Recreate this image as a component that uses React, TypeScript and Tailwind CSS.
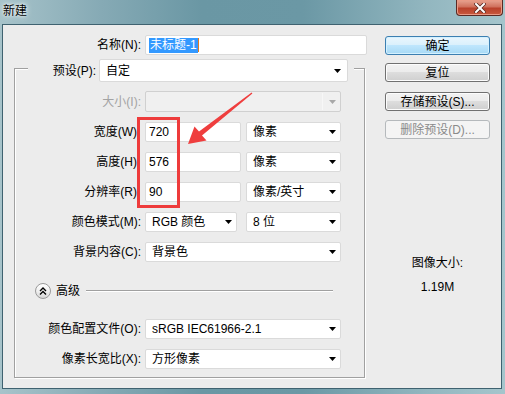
import React from 'react';

type P = { className?: string; children?: React.ReactNode };

const Tri = ({ color = '#000' }: { color?: string }) => (
  <svg width="7" height="4" viewBox="0 0 7 4" className="shrink-0">
    <polygon points="0,0 7,0 3.5,4" fill={color} />
  </svg>
);

function Field({ className = '', children }: P) {
  return (
    <div className={`h-[20px] bg-white border border-[#dadada] rounded-[2px] flex items-center pl-[3px] ${className}`}>
      {children}
    </div>
  );
}

function Select({ className = '', children }: P) {
  return (
    <div className={`bg-white border border-[#dadada] rounded-[2px] flex items-center justify-between pl-[6px] pr-[4px] ${className}`}>
      <span>{children}</span>
      <Tri />
    </div>
  );
}

function Label({ className = '', children }: P) {
  return <div className={`text-right shrink-0 whitespace-nowrap ${className}`}>{children}</div>;
}

function Btn({ className = '', children, kind = 'normal' }: P & { kind?: 'primary' | 'normal' | 'disabled' }) {
  const style =
    kind === 'primary'
      ? 'border-[#3c7fb1] bg-[linear-gradient(#eaf6fd_0%,#d9f0fc_50%,#bee6fd_50%,#a7d9f5_100%)] shadow-[inset_0_0_0_1px_#d4f1ff]'
      : kind === 'disabled'
      ? 'border-[#b5b9bc] bg-[#f4f4f4] text-[#8a8a8a]'
      : 'border-[#707070] bg-[linear-gradient(#f2f2f2_0%,#ebebeb_50%,#dddddd_50%,#cfcfcf_100%)] shadow-[inset_0_0_0_1px_#fcfcfc]';
  return (
    <div className={`h-[19px] w-[105px] flex items-center justify-center rounded-[3px] border ${style} ${className}`}>
      {children}
    </div>
  );
}

export default function App() {
  return (
    <div className="relative w-[505px] h-[394px] overflow-hidden bg-[linear-gradient(90deg,#a7c3ca_0%,#86aab5_20%,#6a97a4_40%,#6b98a5_60%,#93b7c0_85%,#a5c5cc_100%)] pt-[24px] pl-[2px] pr-[3px] pb-[5px] font-['Liberation_Sans','Noto_Sans_CJK_SC',sans-serif] text-[12px] leading-[14px] text-black">
      {/* title */}
      <div className="absolute left-[3px] top-[4px] text-[12px] leading-[14px] [text-shadow:0_0_6px_#ffffff,0_0_3px_#ffffff]">新建</div>
      {/* close button */}
      <div className="absolute top-0 right-[2px] w-[47px] h-[16px] rounded-b-[4px] border border-t-0 border-[#5a2a24] bg-[linear-gradient(#e8a592_0%,#d0715d_45%,#b9412b_55%,#c85a3f_100%)] shadow-[inset_0_0_0_1px_#e99a86] flex items-center justify-center">
        <svg width="12" height="10" viewBox="0 0 12 10">
          <path d="M2 1 L10 9 M10 1 L2 9" stroke="#5b2b25" strokeWidth="3.6" strokeLinecap="square" />
          <path d="M2 1 L10 9 M10 1 L2 9" stroke="#ffffff" strokeWidth="2" strokeLinecap="square" />
        </svg>
      </div>

      {/* client area */}
      <div className="w-full h-full border border-[#3f6270] bg-[#ececec] flex">
        {/* left column */}
        <div className="w-[382px] shrink-0 flex flex-col">
          {/* name row */}
          <div className="mt-[10px] flex items-center">
            <Label className="w-[138px]">名称(N):</Label>
            <Field className="ml-[4px] w-[222px]">
              <span className="bg-[#3399ff] text-white px-[1px] leading-[15px]">未标题-1</span>
              <span className="w-[1px] h-[14px] bg-[#e07b20]" />
            </Field>
          </div>

          {/* group */}
          <div className="mt-[13px] ml-[11px] w-[351px] h-[310px] border border-[#a0a0a0] shadow-[inset_1px_1px_0_#ffffff,1px_1px_0_#ffffff] flex flex-col">
            {/* preset row, over border */}
            <div className="-mt-[10px] ml-[13px] w-[326px] h-[23px] bg-[#ececec] flex items-center">
              <Label className="w-[68px]">预设(P):</Label>
              <Select className="ml-[3px] w-[249px] h-[23px] !pl-[6px] !pr-[6px]">自定</Select>
            </div>

            {/* size (disabled) */}
            <div className="mt-[9px] flex items-center">
              <Label className="w-[126px] text-[#a3a3a3]">大小(I):</Label>
              <div className="ml-[4px] w-[196px] h-[21px] bg-[#f0f0f0] border border-[#d0d0d0] rounded-[2px] flex items-center justify-end pr-[4px]">
                <div className="w-[1px] h-[17px] bg-[#f7f7f7] mr-[6px]" />
                <Tri color="#a8a8a8" />
              </div>
            </div>

            {/* width */}
            <div className="mt-[10px] flex items-center">
              <Label className="w-[126px] pr-[4px]">宽度(W)</Label>
              <Field className="ml-[4px] w-[96px]">720</Field>
              <Select className="ml-[5px] w-[95px] h-[20px]">像素</Select>
            </div>
            {/* height */}
            <div className="mt-[10px] flex items-center">
              <Label className="w-[126px] pr-[4px]">高度(H)</Label>
              <Field className="ml-[4px] w-[96px]">576</Field>
              <Select className="ml-[5px] w-[95px] h-[20px]">像素</Select>
            </div>
            {/* resolution */}
            <div className="mt-[10px] flex items-center">
              <Label className="w-[126px] pr-[4px]">分辨率(R)</Label>
              <Field className="ml-[4px] w-[96px]">90</Field>
              <Select className="ml-[5px] w-[95px] h-[20px]">像素/英寸</Select>
            </div>
            {/* color mode */}
            <div className="mt-[10px] flex items-center">
              <Label className="w-[126px]">颜色模式(M):</Label>
              <Select className="ml-[4px] w-[92px] h-[20px]">RGB 颜色</Select>
              <Select className="ml-[9px] w-[95px] h-[20px]">8 位</Select>
            </div>
            {/* background */}
            <div className="mt-[10px] flex items-center">
              <Label className="w-[126px]">背景内容(C):</Label>
              <Select className="ml-[4px] w-[196px] h-[20px]">背景色</Select>
            </div>

            {/* advanced */}
            <div className="mt-[21px] h-[16px] flex items-center">
              <div className="ml-[20px] w-[16px] h-[16px] rounded-full border border-[#9a9a9a] bg-[linear-gradient(#ffffff_0%,#f0f0f0_50%,#d6d6d6_100%)] flex items-center justify-center shrink-0">
                <svg width="10" height="10" viewBox="0 0 10 10">
                  <path d="M2 5 L5 2 L8 5 M2 8.5 L5 5.5 L8 8.5" stroke="#000" strokeWidth="1.4" fill="none" />
                </svg>
              </div>
              <span className="ml-[5px]">高级</span>
              <div className="ml-[6px] mr-[31px] flex-1 h-[2px] border-t border-[#a0a0a0] border-b border-b-white" />
            </div>

            {/* color profile */}
            <div className="mt-[20px] flex items-center">
              <Label className="w-[126px]">颜色配置文件(O):</Label>
              <Select className="ml-[4px] w-[196px] h-[20px]">sRGB IEC61966-2.1</Select>
            </div>
            {/* pixel aspect */}
            <div className="mt-[10px] flex items-center">
              <Label className="w-[126px]">像素长宽比(X):</Label>
              <Select className="ml-[4px] w-[196px] h-[20px]">方形像素</Select>
            </div>
          </div>
        </div>

        {/* right column */}
        <div className="w-[105px] flex flex-col items-center pt-[11px]">
          <Btn kind="primary">确定</Btn>
          <Btn className="mt-[8px]">复位</Btn>
          <Btn className="mt-[10px]">存储预设(S)...</Btn>
          <Btn className="mt-[9px]" kind="disabled">删除预设(D)...</Btn>
          <div className="mt-[117px]">图像大小:</div>
          <div className="mt-[10px]">1.19M</div>
        </div>
      </div>

      {/* annotation: red box */}
      <div className="absolute left-[137px] top-[117px] w-[43px] h-[91px] border-[3px] border-[#ee3b3b]" />
      {/* annotation: red arrow */}
      <svg className="absolute left-0 top-0 pointer-events-none" width="505" height="394" viewBox="0 0 505 394">
        <polygon
          points="188,144 206.5,140.5 202,135.5 252.4,93.5 251.6,92.5 199,131.5 194.5,126.5"
          fill="#ef3e3e"
        />
      </svg>
    </div>
  );
}
